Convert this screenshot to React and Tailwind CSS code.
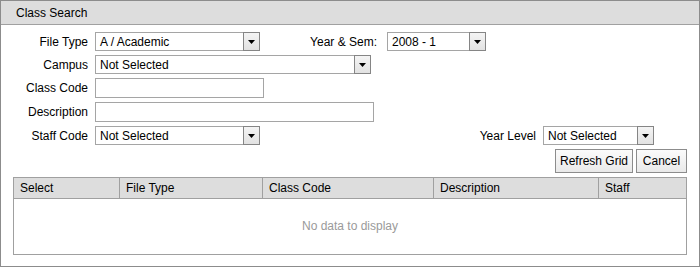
import React from "react";

const font = "font-['Liberation_Sans',Arial,sans-serif]";

const DropArrow = () => (
  <div className="w-[17px] h-full border border-[#858585] bg-gradient-to-b from-[#f4f4f4] to-[#e2e2e2] flex items-center justify-center shrink-0">
    <svg width="7" height="4" viewBox="0 0 7 4">
      <path d="M0 0h7L3.5 4z" fill="#000" />
    </svg>
  </div>
);

const Select = ({ value, width }) => (
  <div className={`flex h-[19px] ${width} bg-white`}>
    <div className="flex-1 flex items-center pl-[4px] border border-r-0 border-[#a5a5a5] text-[12px] text-black leading-none whitespace-nowrap overflow-hidden">
      {value}
    </div>
    <DropArrow />
  </div>
);

const TextBox = ({ width }) => (
  <div className={`h-[20px] ${width} bg-white border border-[#a5a5a5]`} />
);

const Label = ({ children, width = "w-[87px]" }) => (
  <div className={`${width} text-right text-[12px] text-black leading-none shrink-0`}>
    {children}
  </div>
);

const Button = ({ children, width }) => (
  <div className={`${width} h-[24px] border border-[#8c8c8c] bg-gradient-to-b from-[#fbfbfb] to-[#e9e9e9] flex items-center justify-center text-[12px] text-black`}>
    {children}
  </div>
);

const columns = [
  { name: "Select", width: "w-[106px]" },
  { name: "File Type", width: "w-[143px]" },
  { name: "Class Code", width: "w-[171px]" },
  { name: "Description", width: "w-[165px]" },
  { name: "Staff", width: "flex-1" },
];

export default function App() {
  return (
    <div className={`${font} w-[700px] h-[267px] border border-[#8c8c8c] bg-white flex flex-col`}>
      <div className="h-[24px] bg-[#dddddd] border-b border-[#a0a0a0] flex items-center pl-[15px] text-[12px] text-black shrink-0">
        Class Search
      </div>

      <div className="flex flex-col gap-[4px] pt-[7px]">
        <div className="flex items-center">
          <Label>File Type</Label>
          <div className="ml-[7px]">
            <Select value="A / Academic" width="w-[165px]" />
          </div>
          <Label width="w-[117px]">Year &amp; Sem:</Label>
          <div className="ml-[10px]">
            <Select value="2008 - 1" width="w-[99px]" />
          </div>
        </div>

        <div className="flex items-center">
          <Label>Campus</Label>
          <div className="ml-[7px]">
            <Select value="Not Selected" width="w-[276px]" />
          </div>
        </div>

        <div className="flex items-center">
          <Label>Class Code</Label>
          <div className="ml-[7px]">
            <TextBox width="w-[169px]" />
          </div>
        </div>

        <div className="flex items-center">
          <Label>Description</Label>
          <div className="ml-[7px]">
            <TextBox width="w-[279px]" />
          </div>
        </div>

        <div className="flex items-center">
          <Label>Staff Code</Label>
          <div className="ml-[7px]">
            <Select value="Not Selected" width="w-[165px]" />
          </div>
          <div className="flex-1" />
          <Label width="w-auto">Year Level</Label>
          <div className="ml-[7px] mr-[45px]">
            <Select value="Not Selected" width="w-[111px]" />
          </div>
        </div>

        <div className="flex justify-end gap-[3px] mr-[12px]">
          <Button width="w-[78px]">Refresh Grid</Button>
          <Button width="w-[51px]">Cancel</Button>
        </div>

        <div className="mx-[12px] border border-[#a0a0a0]">
          <div className="flex h-[21px] bg-[#dddddd] border-b border-[#a0a0a0]">
            {columns.map((col, i) => (
              <div
                key={col.name}
                className={`${col.width} flex items-center pl-[6px] text-[12px] text-black ${i < columns.length - 1 ? "border-r border-[#a0a0a0]" : ""}`}
              >
                {col.name}
              </div>
            ))}
          </div>
          <div className="h-[55px] flex items-center justify-center text-[12px] text-[#9a9a9a] pb-[1px]">
            No data to display
          </div>
        </div>
      </div>
    </div>
  );
}
